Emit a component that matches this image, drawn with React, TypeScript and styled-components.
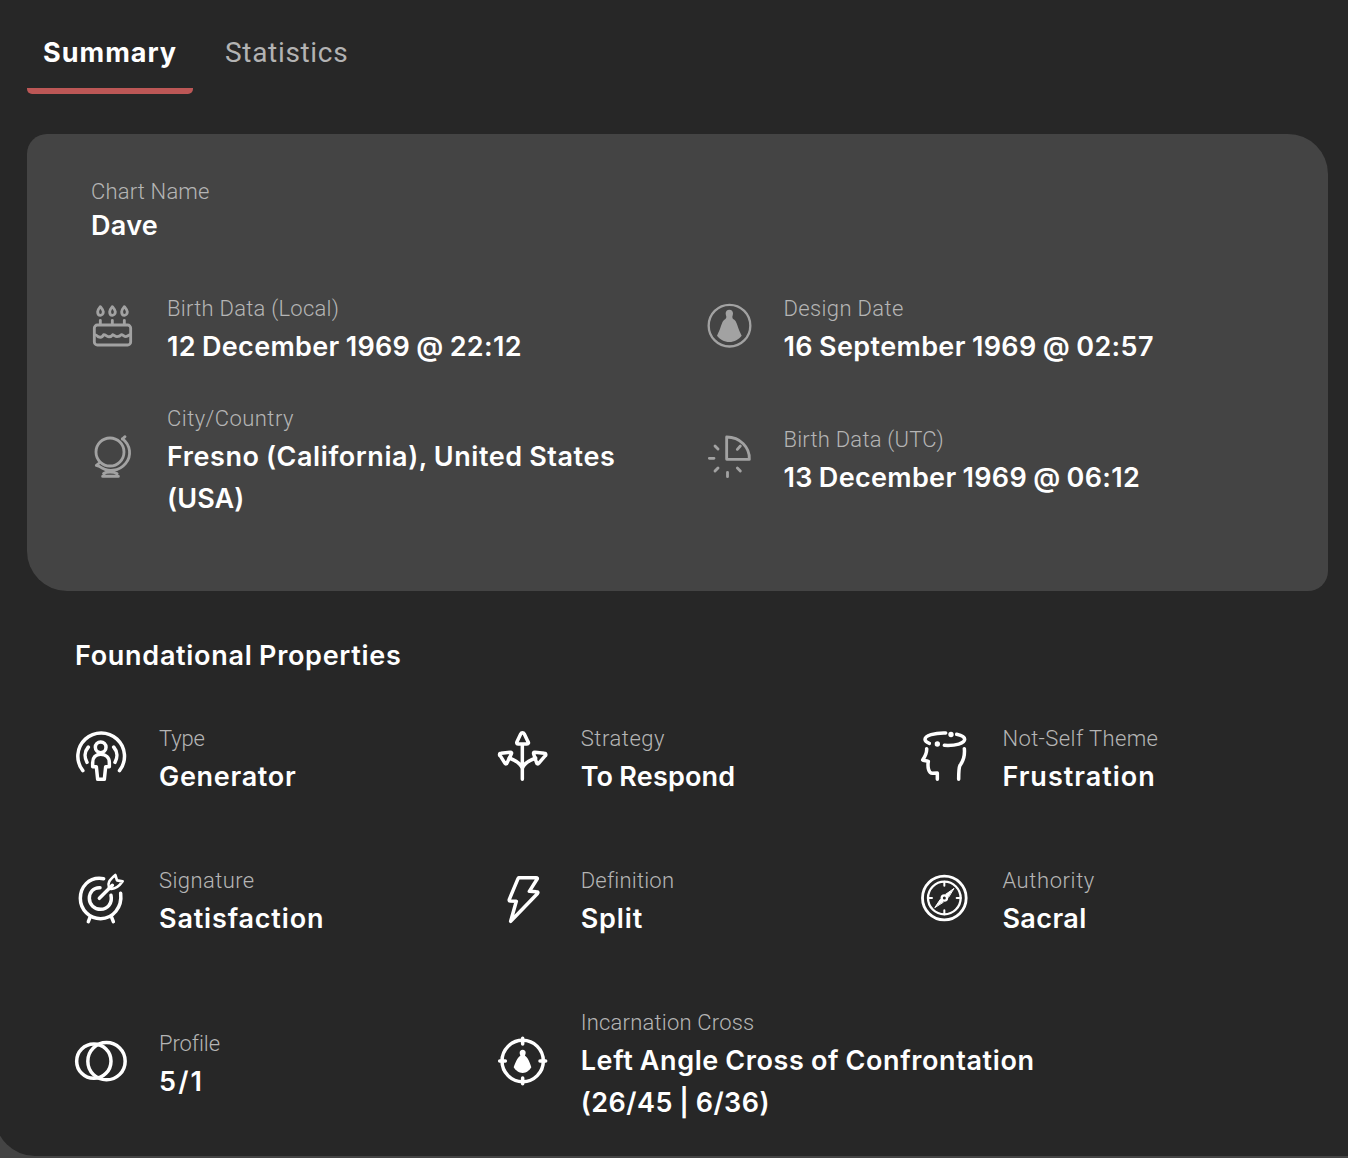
import React from "react";
import styled, { createGlobalStyle } from "styled-components";

const GlobalStyle = createGlobalStyle`
  * { box-sizing: border-box; }
  body { margin: 0; background: #444; overflow: hidden; font-family: Roboto, "Noto Sans", sans-serif; }
`;

const Panel = styled.main`
  height: 1156px;
  margin-left: -5px;
  padding: 0 20px 0 32px;
  background: #272727;
  border-bottom-left-radius: 40px;
`;
const TabBar = styled.nav`
  display: flex;
  gap: 16px;
`;
const Tab = styled.button<{ $active?: boolean }>`
  position: relative;
  height: 94px;
  width: ${(p) => (p.$active ? 166 : 154)}px;
  padding: 11px 0 0 16px;
  border: 0;
  background: none;
  display: flex;
  align-items: flex-start;
  color: ${(p) => (p.$active ? "#fff" : "#b3b3b3")};
  font: ${(p) => (p.$active ? "700 27px/84px Inter" : "400 28px/84px Roboto")}, sans-serif;
  letter-spacing: ${(p) => (p.$active ? 1 : 0.68)}px;
  &::after {
    content: "";
    position: absolute;
    left: 0;
    right: 0;
    bottom: 0;
    height: 6px;
    border-radius: 0 0 5px 5px;
    background: ${(p) => (p.$active ? "#bc5756" : "transparent")};
  }
`;
const Card = styled.section`
  height: 457px;
  margin-top: 40px;
  padding: 42px 64px 0;
  border-radius: 20px 40px 20px 40px;
  background: #444;
`;
const ChartHead = styled.div`
  height: 116.5px;
`;
const Label = styled.div<{ $track: number }>`
  height: 33px;
  color: #b5b5b5;
  font-weight: 300;
  font-size: 22px;
  line-height: 31px;
  letter-spacing: ${(p) => p.$track}px;
  white-space: nowrap;
`;
const Value = styled.div<{ $track: number; $tight?: boolean }>`
  height: 42px;
  margin-top: ${(p) => (p.$tight ? -4.5 : 0)}px;
  color: #fff;
  font-family: Inter, sans-serif;
  font-weight: 600;
  font-size: 27px;
  line-height: 42px;
  letter-spacing: ${(p) => p.$track}px;
  word-spacing: -1px;
  white-space: nowrap;
`;
const BirthGrid = styled.div`
  display: grid;
  grid-template-columns: 616.5px 1fr;
  row-gap: 35px;
  align-items: center;
`;
const PropertyGrid = styled.div`
  display: grid;
  grid-template-columns: repeat(3, 421.7px);
  row-gap: 67px;
  align-items: center;
  margin-top: 46px;
`;
const Item = styled.div<{ $gap: number; $wide?: boolean }>`
  display: flex;
  align-items: center;
  gap: ${(p) => p.$gap}px;
  grid-column: ${(p) => (p.$wide ? "span 2" : "auto")};
`;
const Foundation = styled.section`
  padding: 43.5px 0 0 48px;
`;
const Heading = styled.h2`
  margin: 0;
  color: #fff;
  font-family: Inter, sans-serif;
  font-weight: 600;
  font-size: 27px;
  line-height: 42px;
  letter-spacing: 0.71px;
  word-spacing: -1px;
`;
const Icon = styled.svg<{ $size: number; $muted?: boolean }>`
  flex: none;
  width: ${(p) => p.$size}px;
  height: ${(p) => p.$size}px;
  margin: 0 0 8px ${(p) => (p.$muted ? -1 : 0)}px;
  overflow: visible;
  color: ${(p) => (p.$muted ? "#a2a2a2" : "#fff")};
  fill: none;
  stroke: currentColor;
  stroke-width: ${(p) => (p.$muted ? 8.5 : 10.5)};
  stroke-linecap: round;
  stroke-linejoin: round;
`;

type Line = [text: string, track: number];
type Entry = { label: Line; lines: Line[]; box: string; art: React.ReactNode; wide?: boolean };

const birth: Entry[] = [
  {
    label: ["Birth Data (Local)", 0.26],
    lines: [["12 December 1969 @ 22:12", 0.32]],
    box: "30 27 132 132",
    art: (
      <>
        <path d="M61 35c-5 6-8 10-8 15 0 7 4 11 8 11s9-4 9-11c0-5-4-9-9-15ZM97 35c-5 6-8 10-8 15 0 7 4 11 8 11s9-4 9-11c0-5-4-9-9-15ZM133 35c-5 6-8 10-8 15 0 7 4 11 8 11s9-4 9-11c0-5-4-9-9-15Z" />
        <path d="M61 76v13M97 76v13M133 76v13" />
        <rect x="43" y="90" width="109" height="60" rx="9" />
        <path d="M43 119c6 0 8 2 11 6 7 3 13 3 17-6 6 0 8 5 13 6 7 1 11-1 14-6 5 1 7 6 13 6s9-1 13-6c5 0 8 6 13 6s9-6 15-6" />
      </>
    ),
  },
  {
    label: ["Design Date", 0.36],
    lines: [["16 September 1969 @ 02:57", 0.36]],
    box: "36 27 132 132",
    art: (
      <>
        <circle cx="103.5" cy="92" r="62.5" strokeWidth="7" />
        <path fill="currentColor" stroke="none" d="M103 44c7 0 11 5 11 11 0 4-1 7-2 10 0 5 2 7 6 9 6 4 9 17 15 33l7 15c-8 11-22 19-37 19s-29-8-37-19l8-18c5-13 8-26 14-30 4-2 6-5 6-9-1-3-2-6-2-10 0-6 4-11 11-11Z" />
      </>
    ),
  },
  {
    label: ["City/Country", 0.45],
    lines: [["Fresno (California), United States", 0.57], ["(USA)", 0.1]],
    box: "30 30 132 132",
    art: (
      <>
        <circle cx="90" cy="81" r="42" />
        <path d="M127 41c26 20 28 53 10 74-20 25-55 27-79 9l-9-3M58 114l-9 7M127 42l8-7" />
        <path d="M71 146c7-7 31-7 40 0M68 154h47" strokeWidth="9" />
      </>
    ),
  },
  {
    label: ["Birth Data (UTC)", 0.22],
    lines: [["13 December 1969 @ 06:12", 0.32]],
    box: "36 30 132 132",
    art: (
      <path d="M95 36v67h68c2-36-28-67-68-67ZM127 73l9-10M60 63l9 9M43 100h14M60 138l9-9M97.500 142v13M127 129l9 9" />
    ),
  },
];

const properties: Entry[] = [
  {
    label: ["Type", -0.18],
    lines: [["Generator", 0.7]],
    box: "30 30 156 156",
    art: (
      <>
        <path d="M53.5 152a70 70 0 1 1 110 0" />
        <path d="M70 81c-12 14-12 32-4 46M146 81c12 14 12 32 4 46" />
        <circle cx="107" cy="82" r="16" />
        <path d="M98 178l-4-38H83v-12c0-16 9-25 24-25s26 9 26 25v12h-11l-4 38Z" />
      </>
    ),
  },
  {
    label: ["Strategy", 0.55],
    lines: [["To Respond", 0.2]],
    box: "36 30 156 156",
    art: (
      <>
        <path d="M112 38c-2 0-4 2-5 4L96 65c-2 5 0 7 4 7h26c4 0 6-3 3-7l-11-23c-1-2-4-4-6-4ZM112 73v105M112 145c-5-13-21-24-39-31M112 145c5-13 21-24 40-31" />
        <path d="M44 103c-1 2 0 4 3 6l13 21c2 3 5 2 6-1l13-27c2-4 0-6-4-5l-27 3c-2 0-4 1-4 3ZM182 103c1 2 0 4-3 6l-18 21c-2 3-5 2-6-1l-9-27c-1-4 0-6 4-5l28 3c2 0 4 1 4 3Z" />
      </>
    ),
  },
  {
    label: ["Not-Self Theme", 0.4],
    lines: [["Frustration", 1.0]],
    box: "39 30 156 156",
    art: (
      <>
        <path d="M122 39c-34-1-62 8-62 19 0 5 5 9 13 12M155 43c14 3 24 9 24 15 0 12-27 20-61 18" />
        <path d="M65 86c1 13-4 22-12 34 2 3 10 2 17 4-3 17 1 36 12 36l15-1v19M178 86c2 21-3 37-13 50-4 8-4 20-4 42" />
        <circle cx="138" cy="43.500" r="8" fill="currentColor" stroke="none" />
        <circle cx="97" cy="72" r="8" fill="currentColor" stroke="none" />
      </>
    ),
  },
  {
    label: ["Signature", 0.42],
    lines: [["Satisfaction", 0.83]],
    box: "30 21 156 156",
    art: (
      <>
        <path d="M116 41c-47-8-70 28-70 59 0 34 27 61 61 61 37 0 65-34 60-76M105 68c-20-1-32 14-32 32 0 19 15 33 34 33 21 0 36-19 31-42M75 157l-5 13M140 157l5 13M103 100l39-39" />
        <path d="M132 68c-5-14 0-22 19-38l5 16 17 3c-13 18-24 25-38 22Z" strokeWidth="8" />
      </>
    ),
  },
  {
    label: ["Definition", 0.2],
    lines: [["Split", 0.85]],
    box: "36 21 156 156",
    art: <path d="M101 38h52c4 0 5 2 3 5l-23 36 21 1c5 0 6 2 3 6l-80 83 17-60-18-1c-3 0-4-2-3-5l26-62Z" />,
  },
  {
    label: ["Authority", 0.6],
    lines: [["Sacral", 0.43]],
    box: "39 21 156 156",
    art: (
      <>
        <circle cx="118" cy="99" r="65.500" strokeWidth="8.500" />
        <circle cx="118" cy="99" r="49" strokeWidth="7" />
        <path d="M118 50v12M118 136v12M69 99h12M155 99h12" strokeWidth="6" />
        <circle cx="118" cy="99" r="8" strokeWidth="7" />
        <path fill="currentColor" strokeWidth="3" d="m146 71-24 17 8 8ZM90 127l16-24 8 8Z" />
      </>
    ),
  },
  {
    label: ["Profile", -0.1],
    lines: [["5/1", 2.2]],
    box: "30 30 156 156",
    art: (
      <>
        <circle cx="86.500" cy="108.500" r="51.500" />
        <circle cx="124.500" cy="108.500" r="56" />
      </>
    ),
  },
  {
    label: ["Incarnation Cross", 0.2],
    lines: [["Left Angle Cross of Confrontation", 0.61], ["(26/45 | 6/36)", 0.48]],
    box: "36 30 156 156",
    wide: true,
    art: (
      <>
        <circle cx="113" cy="108" r="62" />
        <path d="M113 40v17M113 159v17M44 108h17M165 108h17" />
        <path fill="currentColor" stroke="none" d="M113 74c6 0 9 4 9 9 0 4-2 6-2 9 8 5 15 20 19 35-5 9-15 17-26 17s-22-8-27-17c5-15 12-30 20-35 0-3-2-5-2-9 0-5 3-9 9-9Z" />
      </>
    ),
  },
];

function Entries({ items, muted }: { items: Entry[]; muted?: boolean }) {
  return (
    <>
      {items.map((e) => (
        <Item key={e.label[0]} $gap={muted ? 33 : 32} $wide={e.wide}>
          <Icon viewBox={e.box} $size={muted ? 44 : 52} $muted={muted}>{e.art}</Icon>
          <div>
            <Label $track={e.label[1]}>{e.label[0]}</Label>
            {e.lines.map(([text, track]) => (
              <Value key={text} $track={track}>{text}</Value>
            ))}
          </div>
        </Item>
      ))}
    </>
  );
}

export default function App() {
  return (
    <>
      <GlobalStyle />
      <Panel>
        <TabBar>
          <Tab $active>Summary</Tab>
          <Tab>Statistics</Tab>
        </TabBar>
        <Card>
          <ChartHead>
            <Label $track={0.17}>Chart Name</Label>
            <Value $track={0.3} $tight>Dave</Value>
          </ChartHead>
          <BirthGrid>
            <Entries items={birth} muted />
          </BirthGrid>
        </Card>
        <Foundation>
          <Heading>Foundational Properties</Heading>
          <PropertyGrid>
            <Entries items={properties} />
          </PropertyGrid>
        </Foundation>
      </Panel>
    </>
  );
}
